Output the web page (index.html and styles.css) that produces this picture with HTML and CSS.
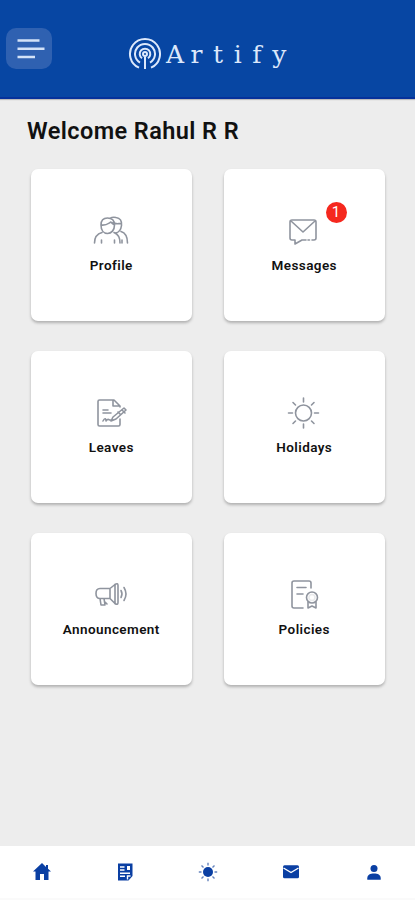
FILE: index.html
```html
<!DOCTYPE html>
<html lang="en">
<head>
<meta charset="utf-8">
<meta name="viewport" content="width=device-width, initial-scale=1">
<title>Artify</title>
<link rel="stylesheet" href="styles.css">
</head>
<body>
<header class="header">
  <button class="menu" aria-label="Menu">
    <svg width="45" height="41" viewBox="0 0 45 41"><path d="M11.500 12.5h22M11.500 20.8h27M11.500 29h17.500"/></svg>
  </button>
  <div class="brand">
    <svg class="logo" width="34" height="34" viewBox="0 0 34 34">
      <path d="M11 30.700A15 15 0 1 1 23 30.700M12 25.6A10 10 0 1 1 22 25.6"/>
      <path d="M14 21.300A5.300 5.300 0 1 1 20 21.300"/>
      <circle cx="17" cy="17" r="2"/><path d="M17 19.5V32"/>
    </svg>
    <span class="wordmark"><span class="lead">A</span>rtify</span>
  </div>
</header>
<main class="main">
  <h1 class="welcome">Welcome Rahul R R</h1>
  <div class="grid">
    <a class="card">
      <svg class="icon" viewBox="0 0 36 36"><path d="M1.500 31c0-6 2-9 7.500-10.500M27 31c0-6-2-9-6-10.500M8 13c0-5 2.500-7 6.500-7s7 2 7 7c0 5-3 8.500-7 8.500S8 18 8 13zM8 13c5 1 8-2 10-3 1 2 2 2.500 3.500 3M17 6.500c2-1.500 4-1.500 6-1 4 .5 6 3 5.500 8-.5 4-2.500 7-6 7.500M20 10.500c3 2 5 1 8 1M28 19.500c5 1.500 6.500 5 6.500 11.500M8.500 28v3M21.500 28v3M29 28v3"/></svg>
      <span class="label">Profile</span>
    </a>
    <a class="card">
      <svg class="icon" viewBox="0 0 36 36"><path d="M20 28h-4l-7 4v-4H6q-2 0-2-2V10q0-2 2-2h22q2 0 2 2v16q0 2-2 2h-2M22 28h1.500M5 9l12 11L29 9"/></svg>
      <span class="label wide">Messages</span>
      <span class="badge">1</span>
    </a>
    <a class="card">
      <svg class="icon" viewBox="0 0 36 36"><path d="M27 13v-1l-6-6H6.500Q5 6 5 7.500v23Q5 32 6.500 32h19q1.500 0 1.500-1.500V25M20 6v6h7M10 16h5M10 19h8M10 27c2-4 3-2 3 0 2-3 3-1 4-1h3M20 23l11-9 2 2-10 9-5 2zM29 16l3 3M25 18l2 2"/></svg>
      <span class="label">Leaves</span>
    </a>
    <a class="card">
      <svg class="icon" viewBox="0 0 36 36"><circle cx="17.500" cy="19" r="8"/><path d="M17.500 4v4M17.500 30v4M2.500 19h4M28.500 19h4M7 8.500l2.500 2.500M25.500 27l2.500 2.500M28 8.500L25.500 11M9.500 27L7 29.500"/></svg>
      <span class="label">Holidays</span>
    </a>
    <a class="card">
      <svg class="icon" viewBox="0 0 36 36"><path d="M17 12.500H7q-4 0-4 5t4 5h10zM17 12.500l5-4v19l-5-5M7 22.500l1 6.500h4l-1-6.500M12 26l2 2M28 14.500q2 3.500 0 7M31 11.500q4 6.500 0 13"/><path d="M22 8.500q3-2 3 1v17q0 3-3 1"/></svg>
      <span class="label wide">Announcement</span>
    </a>
    <a class="card">
      <svg class="icon" viewBox="0 0 36 36"><path d="M17 32H8q-2 0-2-2V7q0-2 2-2h15q2 0 2 2v5M11 11.500h9M11 18h6M22 26v6l4-2 4 2v-6"/><circle cx="26" cy="21.500" r="5.500"/><circle cx="26" cy="21.500" r="3" opacity=".2"/></svg>
      <span class="label">Policies</span>
    </a>
  </div>
</main>
<nav class="nav">
  <a><svg viewBox="0 0 20 20"><path d="M10 1L1 9.500h2.500V18H8v-6h4v6h4.500V9.500H19l-3-2.800V3h-2v2z"/></svg></a>
  <a><svg viewBox="0 0 20 20"><path d="M3 1.500h14.500V14l-4 4.500H3z"/><path class="cut" d="M5 5h4.500M5 8h4.500M5 11.200h10M5 14.300h5M12.500 17.500v-3.500h3"/><path class="hole" d="M12 4h3v4h-3z"/></svg></a>
  <a><svg viewBox="0 0 20 20"><circle cx="10" cy="10" r="5"/><path class="ray" d="M10 .8v2.700M10 16.500v2.700M.8 10h2.700M16.500 10h2.700M3.500 3.500l2 2M14.500 14.500l2 2M16.500 3.500l-2 2M5.500 14.500l-2 2"/></svg></a>
  <a><svg viewBox="0 0 20 20"><rect x="2" y="3.200" width="16" height="13" rx="1.500"/><path class="cut" d="M2.500 6L10 10.500 17.500 6"/></svg></a>
  <a><svg viewBox="0 0 20 20"><circle cx="10" cy="6.500" r="3.500"/><path d="M3.300 17.800v-1.500c0-3.500 3-4.800 6.700-4.800s6.700 1.300 6.700 4.800v1.500z"/></svg></a>
</nav>
</body>
</html>
```
FILE: styles.css
```css
* { box-sizing: border-box; }
body {
  margin: 0;
  height: 900px;
  display: flex;
  flex-direction: column;
  overflow: hidden;
  background: #ededed;
  font-family: Roboto, sans-serif;
  color: #111;
}
.header {
  height: 99px;
  flex: none;
  display: flex;
  align-items: flex-start;
  padding: 28px 0 0 6px;
  background: #0746a3;
  border-bottom: 2px solid #05319b;
  box-shadow: 0 1px 1px #bbb;
}
.menu {
  width: 46px;
  height: 41px;
  padding: 0;
  border: 0;
  border-radius: 10px;
  background: #2f61b1;
}
.menu svg { display: block; }
.menu path { stroke: #d3e2f8; stroke-width: 2.4; }
.brand { display: flex; margin: 9px 0 0 76px; }
.logo { flex: none; fill: none; stroke: #dce8fb; stroke-width: 2; }
.wordmark {
  margin-left: 4px;
  font: 25px/36px "DejaVu Serif", serif;
  letter-spacing: 10.600px;
  color: #dce8fb;
}
.lead { letter-spacing: 6.500px; }
.main { flex: 1; padding: 18px 30px 0; }
.welcome {
  margin: 0 0 24px -3px;
  font-size: 23.500px;
  line-height: 28px;
  font-weight: 600;
  letter-spacing: .42px;
  white-space: nowrap;
}
.grid {
  display: grid;
  grid-template-columns: 161.500px 161.500px;
  grid-auto-rows: 151.500px;
  gap: 30.500px 31.500px;
  padding-left: .5px;
}
.card {
  position: relative;
  display: flex;
  flex-direction: column;
  align-items: center;
  padding-top: 43px;
  border-radius: 7px;
  background: #fff;
  box-shadow: 0 2px 3px rgba(0, 0, 0, .26);
}
.icon {
  width: 36px;
  height: 36px;
  fill: none;
  stroke: #8f949e;
  stroke-width: 1.6;
  stroke-linecap: round;
  stroke-linejoin: round;
}
.label {
  margin-top: 9px;
  font-size: 13.500px;
  line-height: 16px;
  font-weight: 600;
  letter-spacing: .42px;
}
.badge {
  position: absolute;
  left: 102px;
  top: 33px;
  width: 21px;
  height: 21px;
  border-radius: 50%;
  background: #f5281e;
  color: #fff;
  font-size: 15px;
  line-height: 21px;
  text-align: center;
}
.nav {
  height: 54px;
  flex: none;
  display: grid;
  grid-template-columns: repeat(5, 1fr);
  background: #fff;
  border-bottom: 2px solid #fafafa;
}
.nav a { display: flex; justify-content: center; padding-top: 16px; }
.nav svg { width: 20px; height: 20px; fill: #0a3fa3; }
.nav .cut { fill: none; stroke: #fff; stroke-width: 1.4; }
.nav .hole { fill: #fff; }
.nav .ray { fill: none; stroke: #6684bd; stroke-width: 1.4; }
```
